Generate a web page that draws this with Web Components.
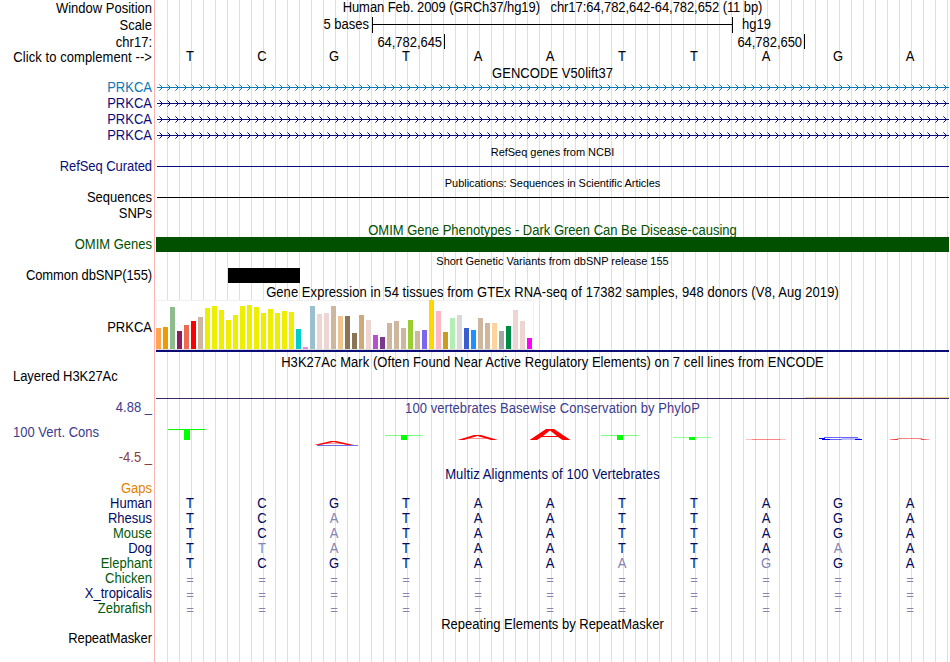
<!DOCTYPE html>
<html lang="en">
<head>
<meta charset="utf-8">
<title>Genome Browser hg19</title>
<style>
    body {
        margin: 0;
        background: #fff;
        font: 13px/15px "Liberation Sans", Arial, sans-serif;
        color: #000;
    }
</style>
</head>
<body>
<genome-view>
    <track-row h="17" label="Window Position" lp="1"><track-title ls="-0.075">Human Feb. 2009 (GRCh37/hg19) &nbsp; chr17:64,782,642-64,782,652 (11 bp)</track-title></track-row>
    <track-row h="17" label="Scale" lp="1"><scale-bar before="5 bases" after="hg19"></scale-bar></track-row>
    <track-row h="15" label="chr17:" lp="1"><position-ticks values="64,782,645 64,782,650"></position-ticks></track-row>
    <track-row h="17" label="Click to complement --&gt;" lp="1" ls="0.08"><base-row seq="TCGTAATTAGA"></base-row></track-row>
    <track-row h="14"><track-title ls="0.06">GENCODE V50lift37</track-title></track-row>
    <track-row h="16" label="PRKCA" color="#0c78b4"><gene-arrows color="#0c78b4"></gene-arrows></track-row>
    <track-row h="16" label="PRKCA" color="#0c0c78"><gene-arrows color="#0c0c78"></gene-arrows></track-row>
    <track-row h="16" label="PRKCA" color="#0c0c78"><gene-arrows color="#0c0c78"></gene-arrows></track-row>
    <track-row h="16" label="PRKCA" color="#0c0c78"><gene-arrows color="#0c0c78"></gene-arrows></track-row>
    <track-row h="15"><track-title small pad="2" ls="-0.03">RefSeq genes from NCBI</track-title></track-row>
    <track-row h="16" label="RefSeq Curated" color="#0c0c78" ls="-0.07"><track-block pad="7" x="2" w="792" h="1" color="#0c0c78"></track-block></track-row>
    <track-row h="15"><track-title small pad="2" ls="-0.05">Publications: Sequences in Scientific Articles</track-title></track-row>
    <track-row h="16" label="Sequences"><track-block pad="7" x="2" w="792" h="1"></track-block></track-row>
    <track-row h="16" label="SNPs"></track-row>
    <track-row h="15"><track-title pad="1" color="#005000">OMIM Gene Phenotypes - Dark Green Can Be Disease-causing</track-title></track-row>
    <track-row h="15" label="OMIM Genes" color="#005000"><track-block x="1" w="793" h="15" color="#005000"></track-block></track-row>
    <track-row h="16"><track-title small pad="3" ls="-0.02">Short Genetic Variants from dbSNP release 155</track-title></track-row>
    <track-row h="15" label="Common dbSNP(155)" ls="-0.11"><track-block x="73" w="72" h="15"></track-block></track-row>
    <track-row h="17"><track-title pad="2" ls="0.06">Gene Expression in 54 tissues from GTEx RNA-seq of 17382 samples, 948 donors (V8, Aug 2019)</track-title></track-row>
    <track-row h="52" label="PRKCA" lp="20"><expression-chart></expression-chart></track-row>
    <track-row h="47" label="Layered H3K27Ac" lp="17" left ls="-0.06"><layered-signal><track-title pad="3" ls="0.06">H3K27Ac Mark (Often Found Near Active Regulatory Elements) on 7 cell lines from ENCODE</track-title></layered-signal></track-row>
    <track-row h="67" color="#3c3c8c">
        <wiggle-axis slot="label" max="4.88 _" name="100 Vert. Cons" min="-4.5 _"></wiggle-axis>
        <track-title pad="2" color="#3c3c8c" ls="0.06">100 vertebrates Basewise Conservation by PhyloP</track-title>
        <phylop-logo></phylop-logo>
    </track-row>
    <track-row h="15"><track-title pad="1" color="#000a64" ls="0.1">Multiz Alignments of 100 Vertebrates</track-title></track-row>
    <track-row h="15" label="Gaps" color="#e68200"></track-row>
    <track-row h="15" label="Human" color="#000a64"><base-row seq="TCGTAATTAGA"></base-row></track-row>
    <track-row h="15" label="Rhesus" color="#000a64"><base-row seq="TCaTAATTAGA"></base-row></track-row>
    <track-row h="15" label="Mouse" color="#005a0a"><base-row seq="TCaTAATTAGA"></base-row></track-row>
    <track-row h="15" label="Dog" color="#000a64"><base-row seq="TtaTAATTAaA"></base-row></track-row>
    <track-row h="15" label="Elephant" color="#005a0a"><base-row seq="TCGTAAaTgGA"></base-row></track-row>
    <track-row h="15" label="Chicken" color="#005a0a"><base-row seq="==========="></base-row></track-row>
    <track-row h="15" label="X_tropicalis" color="#000a64"><base-row seq="==========="></base-row></track-row>
    <track-row h="15" label="Zebrafish" color="#005a0a"><base-row seq="==========="></base-row></track-row>
    <track-row h="15"><track-title pad="1">Repeating Elements by RepeatMasker</track-title></track-row>
    <track-row h="31" label="RepeatMasker" ls="-0.06"></track-row>
</genome-view>

<script>
// the track font is a bit taller than the default sans; stretch from the baseline
const TALL = 'transform: translateY(0.4px) scaleY(1.07); transform-origin: 0 12px;';

class GenomeView extends HTMLElement {
    constructor() {
        super();
        this.attachShadow({ mode: 'open' });
        // left edge line at 154, then a guideline every 12px
        this.shadowRoot.innerHTML = `
            <style>
                :host {
                    display: flex;
                    flex-direction: column;
                    width: 950px;
                    height: 662px;
                    overflow: hidden;
                    background:
                        linear-gradient(#ffb4b4, #ffb4b4) 154px 0 / 1px 100% no-repeat,
                        repeating-linear-gradient(90deg, #dcdcfa 0 1px, transparent 1px 12px) 167px 0 / 782px 100% no-repeat;
                }
            </style>
            <slot></slot>
        `;
    }
}

class TrackRow extends HTMLElement {
    connectedCallback() {
        this.attachShadow({ mode: 'open' });
        const left = this.hasAttribute('left');
        this.shadowRoot.innerHTML = `
            <style>
                :host {
                    display: grid;
                    grid-template-columns: 155px 795px;
                    flex: none;
                    height: ${this.getAttribute('h')}px;
                }
                .label {
                    box-sizing: border-box;
                    padding: ${this.getAttribute('lp') || 0}px 3px 0 13px;
                    text-align: ${left ? 'left' : 'right'};
                    letter-spacing: ${this.getAttribute('ls') || 0}px;
                    white-space: nowrap;
                    color: ${this.getAttribute('color') || '#000'};
                }
                .text { display: block; ${TALL} }
                .data { min-width: 0; height: 100%; }
            </style>
            <div class="label"><slot name="label"></slot></div>
            <div class="data"><slot></slot></div>
        `;
        if (this.hasAttribute('label')) {
            const text = document.createElement('span');
            text.className = 'text';
            text.textContent = this.getAttribute('label');
            this.shadowRoot.querySelector('.label').replaceChildren(text);
        }
    }
}

class TrackTitle extends HTMLElement {
    connectedCallback() {
        this.attachShadow({ mode: 'open' });
        this.shadowRoot.innerHTML = `
            <style>
                :host {
                    display: block;
                    padding-top: ${this.getAttribute('pad') || 0}px;
                    text-align: center;
                    letter-spacing: ${this.getAttribute('ls') || 0}px;
                    white-space: nowrap;
                    color: ${this.getAttribute('color') || '#000'};
                }
                div { ${TALL} }
                :host([small]) { font-size: 11px; line-height: 13px; }
                :host([small]) div { transform: none; }
            </style>
            <div><slot></slot></div>
        `;
    }
}

class ScaleBar extends HTMLElement {
    connectedCallback() {
        this.attachShadow({ mode: 'open' });
        this.shadowRoot.innerHTML = `
            <style>
                :host { display: flex; }
                span { height: 15px; ${TALL} }
                .before { width: 214px; padding-right: 3px; text-align: right; }
                svg { display: block; }
                .after { padding-left: 9px; }
            </style>
            <span class="before">${this.getAttribute('before')}</span>
            <svg width="361" height="17" shape-rendering="crispEdges">
                <path d="M0 0h1v16h-1zM360 0h1v16h-1zM0 7h361v1h-361z"/>
            </svg>
            <span class="after">${this.getAttribute('after')}</span>
        `;
    }
}

class PositionTicks extends HTMLElement {
    connectedCallback() {
        this.attachShadow({ mode: 'open' });
        const ticks = this.getAttribute('values').split(' ').map(v => `<div><span>${v}</span></div>`).join('');
        this.shadowRoot.innerHTML = `
            <style>
                :host { display: flex; }
                div {
                    box-sizing: border-box;
                    width: 360px;
                    height: 15px;
                    padding: 1px 2px 0 0;
                    border-right: 1px solid #000;
                    text-align: right;
                }
                div:first-of-type { width: 290px; }
                span { display: block; letter-spacing: -0.05px; ${TALL} }
            </style>
            ${ticks}
        `;
    }
}

// one cell per base; lower case marks a mismatch against the reference
class BaseRow extends HTMLElement {
    connectedCallback() {
        this.attachShadow({ mode: 'open' });
        const ink = this.parentElement.hasAttribute('color') ? '#000a64' : '#000';
        const cells = [...this.getAttribute('seq')].map(c => {
            const cls = c === '=' ? 'gap' : (c === c.toLowerCase() ? 'diff' : '');
            return `<span class="${cls}">${c.toUpperCase()}</span>`;
        }).join('');
        this.shadowRoot.innerHTML = `
            <style>
                :host {
                    display: grid;
                    grid-template-columns: repeat(11, 72px);
                    margin-left: -1px;
                    line-height: 15px;
                    text-align: center;
                    color: ${ink};
                }
                span { height: 15px; ${TALL} }
                .diff { color: #8284b4; }
                .gap { color: #8284b4; padding-top: 1px; transform: none; }
            </style>
            ${cells}
        `;
    }
}

class GeneArrows extends HTMLElement {
    connectedCallback() {
        this.attachShadow({ mode: 'open' });
        const color = this.getAttribute('color');
        let near = '';
        let far = '';
        for (let x = 7; x < 794; x += 8) {
            near += `M${x - 1} 6h1v3h-1zM${x - 2} 5h1v1h-1zM${x - 2} 9h1v1h-1z`;
            far += `M${x - 3} 4h1v1h-1zM${x - 3} 10h1v1h-1z`;
        }
        this.shadowRoot.innerHTML = `
            <style>
                :host { display: block; }
                svg { display: block; }
            </style>
            <svg width="795" height="16" shape-rendering="crispEdges" fill="${color}">
                <path d="M2 7h792v1h-792z"/>
                <path d="${near}"/>
                <path d="${far}" opacity=".6"/>
            </svg>
        `;
    }
}

class TrackBlock extends HTMLElement {
    connectedCallback() {
        this.attachShadow({ mode: 'open' });
        const get = (name, d) => this.getAttribute(name) || d;
        this.shadowRoot.innerHTML = `
            <style>
                :host { display: block; padding: ${get('pad', 0)}px 0 0 ${get('x', 0)}px; }
                div { width: ${get('w', 0)}px; height: ${get('h', 1)}px; background: ${get('color', '#000')}; }
            </style>
            <div></div>
        `;
    }
}

// [bar height, tissue colour]
const TISSUES = [
    [21, '#ffa54f'], [22, '#ee9a00'], [42, '#8fbc8f'], [18, '#8b1c62'], [24, '#ee6a50'], [28, '#ff0000'],
    [32, '#cdb79e'], [41, '#eeee00'], [43, '#eeee00'], [39, '#eeee00'], [29, '#eeee00'], [34, '#eeee00'],
    [43, '#eeee00'], [44, '#eeee00'], [42, '#eeee00'], [36, '#eeee00'], [40, '#eeee00'], [36, '#eeee00'],
    [38, '#eeee00'], [37, '#eeee00'], [20, '#00cdcd'], [2, '#ee82ee'], [43, '#9ac0cd'], [35, '#eed5d2'],
    [36, '#eed5d2'], [43, '#cdb79e'], [33, '#eec591'], [33, '#8b7355'], [16, '#8b7355'], [34, '#cdaa7d'],
    [29, '#eed5d2'], [14, '#b452cd'], [12, '#7a378b'], [26, '#cdb79e'], [28, '#cdb79e'], [21, '#cdb79e'],
    [29, '#9acd32'], [18, '#cdb79e'], [19, '#7a67ee'], [49, '#ffd700'], [38, '#ffb6c1'], [17, '#cd9b1d'],
    [31, '#b4eeb4'], [34, '#d9d9d9'], [21, '#3a5fcd'], [19, '#1e90ff'], [31, '#cdb79e'], [26, '#cdb79e'],
    [26, '#ffd39b'], [18, '#a6a6a6'], [23, '#008b45'], [39, '#eed5d2'], [28, '#eed5d2'], [11, '#ff00ff']
];

class ExpressionChart extends HTMLElement {
    connectedCallback() {
        this.attachShadow({ mode: 'open' });
        const bars = TISSUES.map(([h, c]) => `<i style="height:${h}px;background:${c}"></i>`).join('');
        this.shadowRoot.innerHTML = `
            <style>
                :host { display: block; padding-left: 1px; }
                .bars {
                    box-sizing: border-box;
                    display: flex;
                    align-items: flex-end;
                    gap: 2px;
                    width: 378px;
                    height: 50px;
                    padding-bottom: 1px;
                    background: #fff;
                    box-shadow: inset 0 -1px #dcdcdc, inset 1px 1px #f0f0f0, inset -1px 0 #f0f0f0;
                }
                i { flex: none; width: 5px; }
                .base { width: 793px; height: 2px; background: #0c0c78; }
            </style>
            <div class="bars">${bars}</div>
            <div class="base"></div>
        `;
    }
}

class LayeredSignal extends HTMLElement {
    connectedCallback() {
        this.attachShadow({ mode: 'open' });
        this.shadowRoot.innerHTML = `
            <style>
                :host { display: flex; flex-direction: column; justify-content: space-between; height: 47px; }
                svg { display: block; }
            </style>
            <slot></slot>
            <svg width="795" height="2" shape-rendering="crispEdges">
                <path d="M650 0h144v1h-144z" fill="#f5d296"/>
                <path d="M1 1h793v1h-793z" fill="#3c2864"/>
            </svg>
        `;
    }
}

class WiggleAxis extends HTMLElement {
    connectedCallback() {
        this.attachShadow({ mode: 'open' });
        this.shadowRoot.innerHTML = `
            <style>
                :host { display: flex; flex-direction: column; gap: 10px; padding-top: 1px; }
                span { ${TALL} }
                .name { text-align: left; }
                .min { color: #8c3c3c; }
            </style>
            <span class="max">${this.getAttribute('max')}</span>
            <span class="name">${this.getAttribute('name')}</span>
            <span class="min">${this.getAttribute('min')}</span>
        `;
    }
}

class PhylopLogo extends HTMLElement {
    connectedCallback() {
        this.attachShadow({ mode: 'open' });
        this.shadowRoot.innerHTML = `
            <style>
                :host { display: block; }
                svg { display: block; }
            </style>
            <svg width="795" height="34" viewBox="155 416 795 34">
                <g fill="#0f0">
                    <path d="M168 429h37.500v1h-37.500zM184 429h6v11h-6z"/>
                    <path d="M385 435h37.500v1h-37.500zM601 435h37.500v1h-37.500z" opacity=".5"/>
                    <path d="M401 435h6v5h-6zM617 435h6v5h-6z"/>
                    <path d="M673 437h38v1h-38z" opacity=".4"/>
                    <path d="M689 437h6v3h-6z"/>
                </g>
                <g fill="#f00">
                    <path d="M314 445L331 441H336L354 445H347L333.500 442L320 445Z"/>
                    <path d="M326 443h16v.6h-16z" opacity=".6"/>
                    <path d="M457.500 440L474 435H481L498 440H491L477.500 436L464 440Z"/>
                    <path d="M469 438h17v.7h-17z" opacity=".6"/>
                    <path fill-rule="evenodd" d="M529.500 440L546 429H554L570.500 440H562.500L558 437H541.500L537 440ZM543 436H557L550 430.500Z"/>
                    <path d="M746 439h40v1h-40z" opacity=".25"/>
                    <path d="M752 439h28v1h-28z" opacity=".3"/>
                    <path d="M890 439.600L898 438.800V440H890zM922 439L930 439.800V440H920z" opacity=".8"/>
                    <path d="M898 438h24v1h-24z" opacity=".5"/>
                </g>
                <path d="M317 445h41v1h-41z" fill="#6e6ef5"/>
                <g fill="#00f">
                    <path d="M819 438h6v1h-6zM822 439h8v1h-8zM855 439h7v1h-7z"/>
                    <path d="M824 437h34v1h-34zM830 439h12v1h-12z" opacity=".6"/>
                    <path d="M842 438h18v1h-18zM842 439h13v1h-13z" opacity=".25"/>
                </g>
            </svg>
        `;
    }
}

customElements.define('genome-view', GenomeView);
customElements.define('track-row', TrackRow);
customElements.define('track-title', TrackTitle);
customElements.define('scale-bar', ScaleBar);
customElements.define('position-ticks', PositionTicks);
customElements.define('base-row', BaseRow);
customElements.define('gene-arrows', GeneArrows);
customElements.define('track-block', TrackBlock);
customElements.define('expression-chart', ExpressionChart);
customElements.define('layered-signal', LayeredSignal);
customElements.define('wiggle-axis', WiggleAxis);
customElements.define('phylop-logo', PhylopLogo);
</script>
</body>
</html>
